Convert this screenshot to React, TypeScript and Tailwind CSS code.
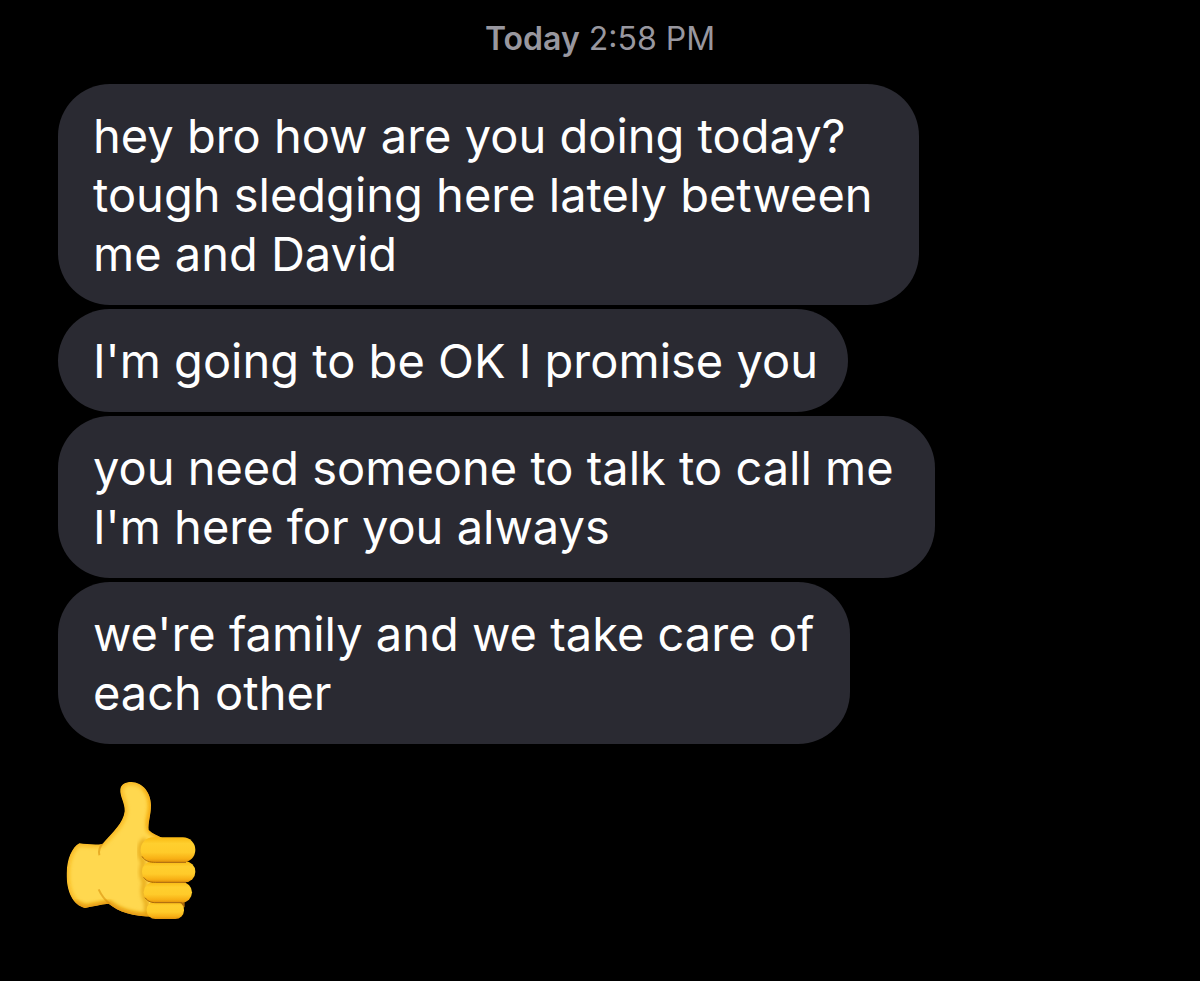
interface Message {
  text: string;
  width: string;
}

const messages: Message[] = [
  {
    text: 'hey bro how are you doing today?\ntough sledging here lately between\nme and David',
    width: 'w-[861px]',
  },
  { text: "I'm going to be OK I promise you", width: 'w-[790px]' },
  {
    text: "you need someone to talk to call me\nI'm here for you always",
    width: 'w-[877px]',
  },
  { text: "we're family and we take care of\neach other", width: 'w-[792px]' },
];

const HAND =
  'M88 220C110 222 135 226 157 222C190 186 220 158 224 124C225 98 209 80 211 58C213 42 226 36 244 36C279 37 302 68 303 105C303 135 293 160 296 180C307 192 322 196 338 205V440H310C250 440 205 425 176 401C150 404 128 409 105 414C68 405 49 365 50 310C51 266 66 232 88 220Z';

function ThumbsUp() {
  return (
    <svg
      viewBox="45 30 396 420"
      className="w-[132px] h-[140px]"
      role="img"
      aria-label="Thumbs up"
    >
      <defs>
        <linearGradient id="finger" x1="0" y1="0" x2="0" y2="1">
          <stop offset="0" stopColor="#f9b913" />
          <stop offset="0.25" stopColor="#ffcf2e" />
          <stop offset="0.6" stopColor="#ffcb2a" />
          <stop offset="0.85" stopColor="#f8b015" />
          <stop offset="1" stopColor="#e2930c" />
        </linearGradient>
        <filter id="soft" x="-30%" y="-30%" width="160%" height="160%">
          <feGaussianBlur stdDeviation="6" />
        </filter>
        <filter id="crease" x="-30%" y="-30%" width="160%" height="160%">
          <feGaussianBlur stdDeviation="2" />
        </filter>
        <clipPath id="hand">
          <path d={HAND} />
        </clipPath>
      </defs>

      <g clipPath="url(#hand)">
        <path d={HAND} fill="#ffd84f" />
        {/* darker rim all round, heavier on the right of the thumb and underneath */}
        <path d={HAND} fill="none" stroke="#f5ae12" strokeWidth="12" filter="url(#soft)" />
        <path
          d="M285 50C312 82 306 120 300 140C292 165 296 180 340 203"
          fill="none"
          stroke="#f3a60c"
          strokeWidth="12"
          filter="url(#soft)"
        />
        <path
          d="M70 400L108 414L176 401C205 425 250 440 310 440"
          fill="none"
          stroke="#e39710"
          strokeWidth="16"
          filter="url(#soft)"
        />
        {/* wrist */}
        <path
          d="M159 218C148 232 144 242 148 256M146 358C154 376 165 390 180 402"
          fill="none"
          stroke="#d9920d"
          strokeWidth="6"
          filter="url(#crease)"
          opacity="0.6"
        />
        {/* where the fingers fold into the palm */}
        <path
          d="M286 208C266 222 264 258 281 276C271 300 274 322 284 337C276 360 280 384 290 397V436"
          fill="none"
          stroke="#dd960d"
          strokeWidth="9"
          filter="url(#soft)"
        />
      </g>

      <path d="M306 240H404V412H306Z" fill="#a9690a" />
      <rect x="290" y="394" width="112" height="53" rx="26" fill="url(#finger)" />
      <rect x="281" y="336" width="145" height="62" rx="31" fill="url(#finger)" />
      <rect x="276" y="274" width="160" height="63" rx="31" fill="url(#finger)" />
      <rect x="272" y="202" width="164" height="75" rx="37" fill="url(#finger)" />
      <g fill="none" stroke="#a9670a" strokeWidth="3" filter="url(#crease)">
        <path d="M276 259C285 274 300 277 316 277H408" />
        <path d="M281 322C290 335 302 337 316 337H408" />
        <path d="M285 383C295 396 306 398 318 398H396" />
      </g>
    </svg>
  );
}

export default function App() {
  return (
    <main className="min-h-screen bg-black pt-5 pb-15 font-['Inter','Liberation_Sans',sans-serif]">
      <p className="text-center text-[32px] leading-[38px] text-[#98979f]">
        <span className="font-semibold">Today</span> 2:58 PM
      </p>

      <ul className="mt-[26px] flex flex-col items-start gap-1 px-[58px]">
        {messages.map((message) => (
          <li
            key={message.text}
            className={`max-w-full rounded-[52px] bg-[#2a2a32] pl-[35px] pr-6 py-[22px] text-[47px] leading-[59px] text-white whitespace-pre-line ${message.width}`}
          >
            {message.text}
          </li>
        ))}
      </ul>

      <div className="mt-9 px-[65px]">
        <ThumbsUp />
      </div>
    </main>
  );
}
